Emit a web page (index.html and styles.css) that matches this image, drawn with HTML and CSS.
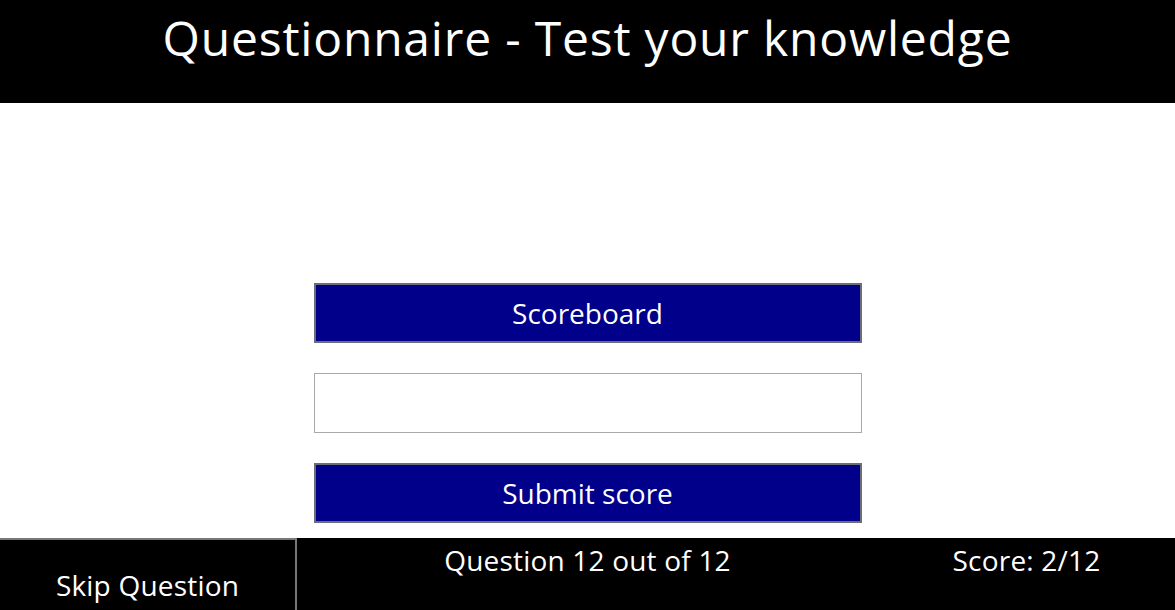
FILE: index.html
```html
<!DOCTYPE html>
<html>
<head>
<meta charset="utf-8">
<link rel="stylesheet" href="styles.css">
</head>
<body>
<header class="top">
  <h1 class="title">Questionnaire - Test your knowledge</h1>
</header>
<main class="content">
  <button class="btn">Scoreboard</button>
  <input class="name" type="text">
  <button class="btn">Submit score</button>
</main>
<footer class="bar">
  <button class="skip">Skip Question</button>
  <div class="progress">Question 12 out of 12</div>
  <div class="score">Score: 2/12</div>
</footer>
</body>
</html>
```
FILE: styles.css
```css
html, body {
  margin: 0;
  padding: 0;
  background: #fff;
  font-family: "Open Sans", "Noto Sans", sans-serif;
}
.top {
  background: #000;
  height: 103px;
  display: flex;
  justify-content: center;
}
.title {
  margin: 0;
  padding-top: 2px;
  color: #fff;
  font-weight: 400;
  font-size: 48px;
  line-height: 72px;
  letter-spacing: 0.8px;
}
.content {
  display: flex;
  flex-direction: column;
  align-items: center;
  gap: 30px;
  padding-top: 180px;
}
.btn, .name {
  box-sizing: border-box;
  width: 548px;
  height: 60px;
  margin: 0;
}
.btn {
  background: #00008b;
  color: #fff;
  border: 2px solid #6d6d7a;
  font-family: inherit;
  font-size: 28px;
  letter-spacing: 0;
  padding: 0;
}
.name {
  border: 1px solid #a9a9a9;
  background: #fff;
}
.bar {
  position: fixed;
  left: 0;
  right: 0;
  bottom: 0;
  height: 72px;
  background: #000;
  color: #fff;
  display: grid;
  grid-template-columns: 297px 1fr 297px;
  font-size: 28px;
  letter-spacing: 0.2px;
}
.skip {
  box-sizing: border-box;
  height: 72px;
  margin: 0;
  background: #000;
  color: #fff;
  border: 2px solid #777;
  border-left: 0;
  border-bottom: 0;
  font-family: inherit;
  font-size: 28px;
  letter-spacing: 0.2px;
  padding: 20px 0 0 0;
}
.progress, .score {
  text-align: center;
  line-height: 44px;
}
```
